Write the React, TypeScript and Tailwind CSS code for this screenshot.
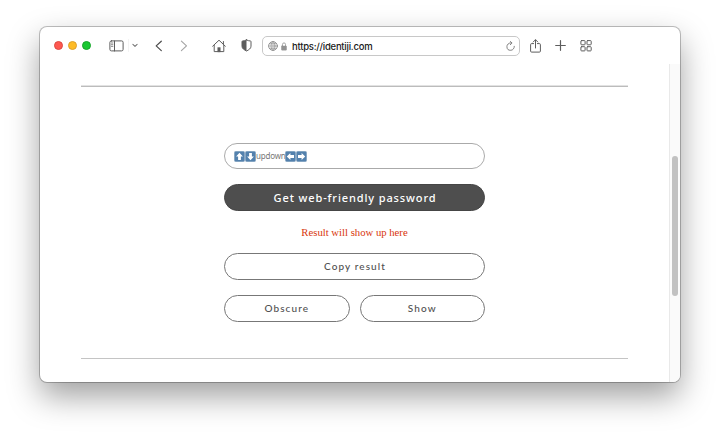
import type { ReactNode } from "react";

function Icon({ className, box, children }: { className: string; box: string; children: ReactNode }) {
  return (
    <svg className={`block shrink-0 ${className}`} viewBox={box} fill="none" stroke="currentColor" strokeLinecap="round" strokeLinejoin="round">
      {children}
    </svg>
  );
}

function Arrow({ angle }: { angle: number }) {
  return (
    <svg className="block h-[11px] w-[11px] shrink-0" viewBox="0 0 11 11">
      <rect x="0.3" y="0.3" width="10.4" height="10.4" rx="1.6" fill="#5381ad" stroke="#8ba8c3" strokeWidth="0.6" />
      <path d="M5.5 1.8 8.9 5.4H6.9V9H4.1V5.4H2.1Z" fill="#fff" transform={`rotate(${angle} 5.5 5.5)`} />
    </svg>
  );
}

function Toolbar() {
  return (
    <header className="flex h-[37px] items-center pl-[14px] text-[#5d5d5d]">
      <div className="flex gap-[5px]">
        <i className="h-[9px] w-[9px] rounded-full border-[0.5px] border-[#dd4a43] bg-[#fe5850]" />
        <i className="h-[9px] w-[9px] rounded-full border-[0.5px] border-[#dda02d] bg-[#febb26]" />
        <i className="h-[9px] w-[9px] rounded-full border-[0.5px] border-[#18a52b] bg-[#1ac832]" />
      </div>
      <Icon className="ml-[18px] h-[12px] w-[15px]" box="0 0 15 12">
        <rect x="0.9" y="0.9" width="13.2" height="10" rx="1.5" />
        <path d="M5.5 1v10" />
        <path d="M2.4 3h1.5M2.4 4.7h1.5M2.4 6.4h1.5" strokeWidth="0.7" />
      </Icon>
      <i className="ml-[4px] h-[13px] w-px bg-[#f3f3f3]" />
      <Icon className="ml-[3px] h-[5px] w-[6px] text-[#777]" box="0 0 6 5">
        <path d="m0.9 1.4 2.1 2 2.1-2" strokeWidth="1.1" />
      </Icon>
      <Icon className="ml-[17px] h-[12px] w-[8px] text-[#4d4d4d]" box="0 0 8 12">
        <path d="M6.3 1.2 1.2 5.9l5.1 4.7" strokeWidth="1.25" />
      </Icon>
      <Icon className="ml-[17px] h-[12px] w-[8px] text-[#a5a5a5]" box="0 0 8 12">
        <path d="m1.4 1.2 5.1 4.7-5.1 4.7" strokeWidth="1.15" />
      </Icon>
      <Icon className="ml-[24px] h-[14px] w-[14px]" box="0 0 14 14">
        <path d="M0.7 7.2 7 1.2l6.3 6M2.2 6.4v6.2h9.6V6.4M11.4 4.900V2.500" />
        <path d="M5.7 12.5V8.6h2.6v3.900Z" fill="currentColor" strokeWidth="0.4" />
      </Icon>
      <Icon className="ml-[15px] h-[13px] w-[11px]" box="0 0 11 13">
        <path d="M5.500 .9c1.300.7 2.600 1 4 1.100.3 0 .5.2.5.5V7.200c0 2.300-2.100 3.600-4.500 4.800C3.100 10.800 1 9.500 1 7.200V2.500c0-.3.2-.5.5-.5C2.900 1.900 4.200 1.600 5.500 .9Z" />
        <path d="M5.500 1v11C3.100 10.800 1 9.500 1 7.200V2.200C2.800 2 4.300 1.700 5.500 1Z" fill="currentColor" stroke="none" />
      </Icon>
      <div className="ml-[10px] flex h-[20px] w-[258px] shrink-0 items-center rounded-[5px] border border-[#c8c8c8] bg-white pl-[5px]">
        <Icon className="h-[10px] w-[10px] text-[#8b8b8b]" box="0 0 10 10">
          <circle cx="5" cy="5" r="4.400" strokeWidth="0.9" />
          <ellipse cx="5" cy="5" rx="2" ry="4.400" strokeWidth="0.7" />
          <path d="M.7 5h8.600M1.500 2.700h7M1.500 7.300h7M5 .7v8.600" strokeWidth="0.6" />
        </Icon>
        <Icon className="ml-[3px] mt-px h-[9px] w-[6px] text-[#929292]" box="0 0 6 9">
          <path d="M1.500 4V2.400a1.500 1.500 0 0 1 3 0V4" strokeWidth="0.8" />
          <rect x="0.400" y="3.900" width="5.200" height="4.300" rx="0.600" fill="currentColor" strokeWidth="0.400" />
        </Icon>
        <span className="ml-[5px] mt-[2px] font-['Inter',sans-serif] text-[9.500px] font-medium leading-[14px] tracking-[-0.250px] text-[#202020]">https://identiji.com</span>
        <Icon className="ml-auto mr-[4px] mt-px h-[10px] w-[9px] text-[#757575]" box="0 0 9 10">
          <path d="M8.300 5.300A3.700 3.700 0 1 1 4.600 1.900M4.300.5 6.100 2 4.300 3.700" strokeWidth="0.9" />
        </Icon>
      </div>
      <Icon className="ml-[10px] h-[14px] w-[11px]" box="0 0 11 14">
        <path d="M3.600 4.600H1.600a1 1 0 0 0-1 1v6.500a1 1 0 0 0 1 1h7.800a1 1 0 0 0 1-1V5.600a1 1 0 0 0-1-1h-2M5.500 9V.9M3.200 3 5.500.7 7.800 3" />
      </Icon>
      <Icon className="ml-[14px] h-[11px] w-[11px]" box="0 0 11 11">
        <path d="M5.500.7v9.600M.7 5.500h9.600" strokeWidth="1.200" />
      </Icon>
      <Icon className="ml-[14px] h-[12px] w-[12px]" box="0 0 12 12">
        <rect x="0.900" y="0.600" width="4.200" height="4.200" rx="0.700" />
        <rect x="7" y="0.600" width="4.200" height="4.200" rx="0.700" />
        <rect x="0.900" y="6.700" width="4.200" height="4.200" rx="0.700" />
        <rect x="7" y="6.700" width="4.200" height="4.200" rx="0.700" />
      </Icon>
    </header>
  );
}

export default function App() {
  const outline = "flex h-[27px] items-center justify-center rounded-full border border-[#777] bg-white text-[10px] font-medium tracking-[1.100px] text-[#505050]";
  return (
    <main className="h-[435px] w-[720px] overflow-hidden bg-white pl-[40px] pt-[27px]">
      <div className="flex h-[355px] w-[640px] flex-col overflow-hidden rounded-[7px] bg-white shadow-[0_0_0_1px_rgba(0,0,0,0.24),0_14px_32px_rgba(0,0,0,0.38)]">
        <Toolbar />
        <div className="flex min-h-0 flex-1">
          <section className="flex flex-1 flex-col pl-[41px] pt-[21px]">
            <div className="h-[2px] w-[547px] border-b border-[#bcbcbc] bg-[#e2e2e2]" />
            <div className="ml-[143px] mt-[56px] w-[261px] font-['Lato',sans-serif]">
              <div className="flex h-[26px] items-center rounded-full border border-[#aaa] pl-[9px]">
                <Arrow angle={0} /><Arrow angle={180} />
                <span className="w-[29px] font-['Noto_Sans',sans-serif] text-[8px] tracking-[-0.200px] text-[#777]">updown</span>
                <Arrow angle={270} /><Arrow angle={90} />
              </div>
              <button className="mt-[15px] flex h-[27px] w-full items-center justify-center rounded-full border border-[#454545] bg-[#4e4e4e] pl-px pt-px font-['Noto_Sans',sans-serif] text-[11px] font-medium tracking-[0.880px] text-white">Get web-friendly password</button>
              <p className="mt-[14px] h-[14px] text-center font-['Liberation_Serif',serif] text-[10.700px] leading-[14px] text-[#d8360c]">Result will show up here</p>
              <button className={`${outline} mt-[14px] w-full pl-px`}>Copy result</button>
              <div className="mt-[15px] flex gap-[10px]">
                <button className={`${outline} flex-1`}>Obscure</button>
                <button className={`${outline} flex-1`}>Show</button>
              </div>
            </div>
            <div className="mt-[36px] h-px w-[547px] bg-[#c4c4c4]" />
          </section>
          <aside className="w-[11px] border-l border-[#e9e9e9] bg-[#fafafa] pl-[2px] pt-[92px]">
            <div className="h-[140px] w-[6px] rounded-full bg-[#c1c1c1]" />
          </aside>
        </div>
      </div>
    </main>
  );
}
